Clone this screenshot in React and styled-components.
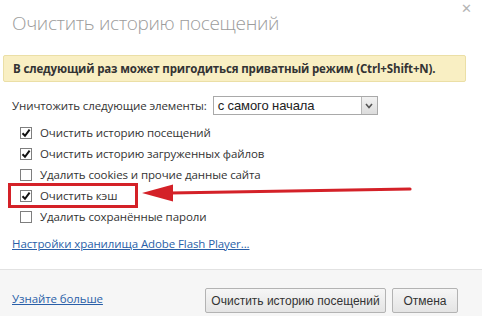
import styled, { createGlobalStyle } from "styled-components";

const GlobalStyle = createGlobalStyle`
  html, body {
    margin: 0;
    padding: 0;
    background: #ffffff;
  }
  body {
    font-family: "Open Sans", "Noto Sans", sans-serif;
  }
`;

const Dialog = styled.div`
  position: relative;
  width: 482px;
  height: 316px;
  background: #ffffff;
  display: flex;
  flex-direction: column;
  overflow: hidden;
`;

const Header = styled.div`
  display: flex;
  justify-content: space-between;
  align-items: flex-start;
  height: 55px;
  padding: 0 10px 0 12px;
  box-sizing: border-box;
`;

const Title = styled.h1`
  margin: 9px 0 0;
  font-family: "Open Sans", sans-serif;
  font-weight: 300;
  font-size: 19px;
  line-height: 28px;
  color: #9c9c9c;
  letter-spacing: -0.35px;
`;

const Close = styled.span`
  margin-top: 1px;
  font-family: "DejaVu Sans", sans-serif;
  font-size: 13px;
  color: #b4b4b4;
`;

const Body = styled.div`
  flex: 1;
  padding: 0 16px 0 3px;
`;

const Banner = styled.div`
  height: 27px;
  box-sizing: border-box;
  background: #f9efc3;
  border: 1px solid #ebdfa6;
  border-radius: 2px;
  padding: 0 0 0 9px;
  display: flex;
  align-items: center;
  font-family: "Open Sans", sans-serif;
  font-weight: 700;
  font-size: 11.5px;
  color: #333;
  letter-spacing: -0.15px;
`;

const Content = styled.div`
  padding: 14px 0 0 9px;
`;

const SelectRow = styled.div`
  display: flex;
  align-items: center;
  gap: 6px;
  height: 19px;
  font-size: 11.5px;
  color: #333;
  letter-spacing: -0.1px;
`;

const Select = styled.div`
  display: flex;
  width: 165px;
  height: 19px;
  box-sizing: border-box;
  border: 1px solid #a9a9a9;
  background: #fff;
`;

const SelectText = styled.span`
  flex: 1;
  padding-left: 4px;
  font-family: "Liberation Sans", Arial, sans-serif;
  font-size: 13px;
  line-height: 17px;
  color: #222;
`;

const SelectButton = styled.span`
  width: 15px;
  border-left: 1px solid #b7b7b7;
  background: linear-gradient(#f2f2f2, #dcdcdc);
  display: flex;
  align-items: center;
  justify-content: center;
`;

const List = styled.div`
  display: flex;
  flex-direction: column;
  padding: 7px 0 0 8px;
`;

const Row = styled.label`
  display: flex;
  align-items: center;
  gap: 8px;
  height: 21px;
  font-size: 11.5px;
  color: #333;
  letter-spacing: -0.1px;
`;

const Box = styled.span`
  width: 12px;
  height: 12px;
  box-sizing: border-box;
  border: 1px solid #7e7e7e;
  background: #fff;
  display: flex;
  align-items: center;
  justify-content: center;
`;

const FlashLink = styled.a`
  display: block;
  margin-top: 9px;
  font-size: 11.5px;
  color: #2a5fa8;
  text-decoration: underline;
  letter-spacing: -0.1px;
`;

const Footer = styled.div`
  height: 47px;
  box-sizing: border-box;
  border-top: 1px solid #e2e2e2;
  background: #f6f6f6;
  display: flex;
  align-items: flex-end;
  justify-content: space-between;
  padding: 0 24px 3px 12px;
`;

const MoreLink = styled.a`
  margin-bottom: 7px;
  font-size: 11.5px;
  color: #2a5fa8;
  text-decoration: underline;
  letter-spacing: -0.1px;
`;

const Buttons = styled.div`
  display: flex;
  gap: 6px;
`;

const Button = styled.button`
  height: 25px;
  padding: 0;
  width: ${(p) => p.$width}px;
  border: 1px solid #b3b3b3;
  border-radius: 2px;
  background: linear-gradient(#f6f6f6, #e4e4e4);
  font-family: "Liberation Sans", Arial, sans-serif;
  font-size: 12px;
  color: #333;
`;

const Highlight = styled.div`
  position: absolute;
  left: 8px;
  top: 183px;
  width: 130px;
  height: 25px;
  box-sizing: border-box;
  border: 3px solid #d42128;
`;

const Arrow = styled.svg`
  position: absolute;
  left: 136px;
  top: 180px;
`;

function Check() {
  return (
    <svg width="10" height="10" viewBox="0 0 10 10">
      <path d="M1.5 5.2 L4 7.8 L8.6 1.6" fill="none" stroke="#111" strokeWidth="2" />
    </svg>
  );
}

const items = [
  { label: "Очистить историю посещений", checked: true },
  { label: "Очистить историю загруженных файлов", checked: true },
  { label: "Удалить cookies и прочие данные сайта", checked: false },
  { label: "Очистить кэш", checked: true },
  { label: "Удалить сохранённые пароли", checked: false },
];

export default function App() {
  return (
    <>
      <GlobalStyle />
      <Dialog>
        <Header>
          <Title>Очистить историю посещений</Title>
          <Close>✕</Close>
        </Header>
        <Body>
          <Banner>В следующий раз может пригодиться приватный режим (Ctrl+Shift+N).</Banner>
          <Content>
            <SelectRow>
              Уничтожить следующие элементы:
              <Select>
                <SelectText>с самого начала</SelectText>
                <SelectButton>
                  <svg width="8" height="6" viewBox="0 0 8 6">
                    <path d="M1 1 L4 4.5 L7 1" fill="none" stroke="#555" strokeWidth="1.6" />
                  </svg>
                </SelectButton>
              </Select>
            </SelectRow>
            <List>
              {items.map((it) => (
                <Row key={it.label}>
                  <Box>{it.checked && <Check />}</Box>
                  {it.label}
                </Row>
              ))}
            </List>
            <FlashLink>Настройки хранилища Adobe Flash Player...</FlashLink>
          </Content>
        </Body>
        <Footer>
          <MoreLink>Узнайте больше</MoreLink>
          <Buttons>
            <Button $width={181}>Очистить историю посещений</Button>
            <Button $width={66}>Отмена</Button>
          </Buttons>
        </Footer>
        <Highlight />
        <Arrow width="280" height="26" viewBox="0 0 280 26">
          <path d="M34 13 L274 9" stroke="#d42128" strokeWidth="3.2" strokeLinecap="round" />
          <path d="M6 13 L37 4.5 L37 21.5 Z" fill="#d42128" />
        </Arrow>
      </Dialog>
    </>
  );
}
